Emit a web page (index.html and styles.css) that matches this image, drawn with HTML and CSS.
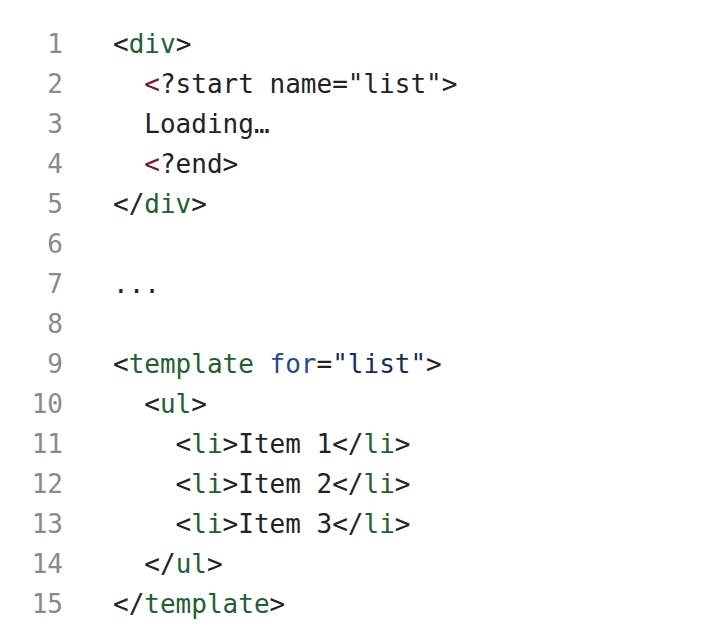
FILE: index.html
```html
<!DOCTYPE html>
<html>
<head>
<meta charset="utf-8">
<link rel="stylesheet" href="styles.css">
</head>
<body>
<div class="code">
<div class="ln">1</div><div class="src">&lt;<span class="t">div</span>&gt;</div>
<div class="ln">2</div><div class="src">  <span class="pi">&lt;</span>?start name="list"&gt;</div>
<div class="ln">3</div><div class="src">  Loading…</div>
<div class="ln">4</div><div class="src">  <span class="pi">&lt;</span>?end&gt;</div>
<div class="ln">5</div><div class="src">&lt;/<span class="t">div</span>&gt;</div>
<div class="ln">6</div><div class="src"></div>
<div class="ln">7</div><div class="src">...</div>
<div class="ln">8</div><div class="src"></div>
<div class="ln">9</div><div class="src">&lt;<span class="t">template</span> <span class="a">for</span>=<span class="s">"list"</span>&gt;</div>
<div class="ln">10</div><div class="src">  &lt;<span class="t">ul</span>&gt;</div>
<div class="ln">11</div><div class="src">    &lt;<span class="t">li</span>&gt;Item 1&lt;/<span class="t">li</span>&gt;</div>
<div class="ln">12</div><div class="src">    &lt;<span class="t">li</span>&gt;Item 2&lt;/<span class="t">li</span>&gt;</div>
<div class="ln">13</div><div class="src">    &lt;<span class="t">li</span>&gt;Item 3&lt;/<span class="t">li</span>&gt;</div>
<div class="ln">14</div><div class="src">  &lt;/<span class="t">ul</span>&gt;</div>
<div class="ln">15</div><div class="src">&lt;/<span class="t">template</span>&gt;</div>
</div>
</body>
</html>
```
FILE: styles.css
```css
html, body {
  margin: 0;
  background: #ffffff;
}
.code {
  display: grid;
  grid-template-columns: 63px 1fr;
  column-gap: 50px;
  padding-top: 24px;
  font-family: "DejaVu Sans Mono", monospace;
  font-size: 26px;
  line-height: 40px;
  color: #222222;
}
.ln {
  text-align: right;
  color: #8a8a8a;
}
.src {
  white-space: pre;
  min-height: 40px;
}
.t { color: #1e6130; }
.pi { color: #7c1426; }
.a { color: #1f4c93; }
.s { color: #142e5c; }
```
